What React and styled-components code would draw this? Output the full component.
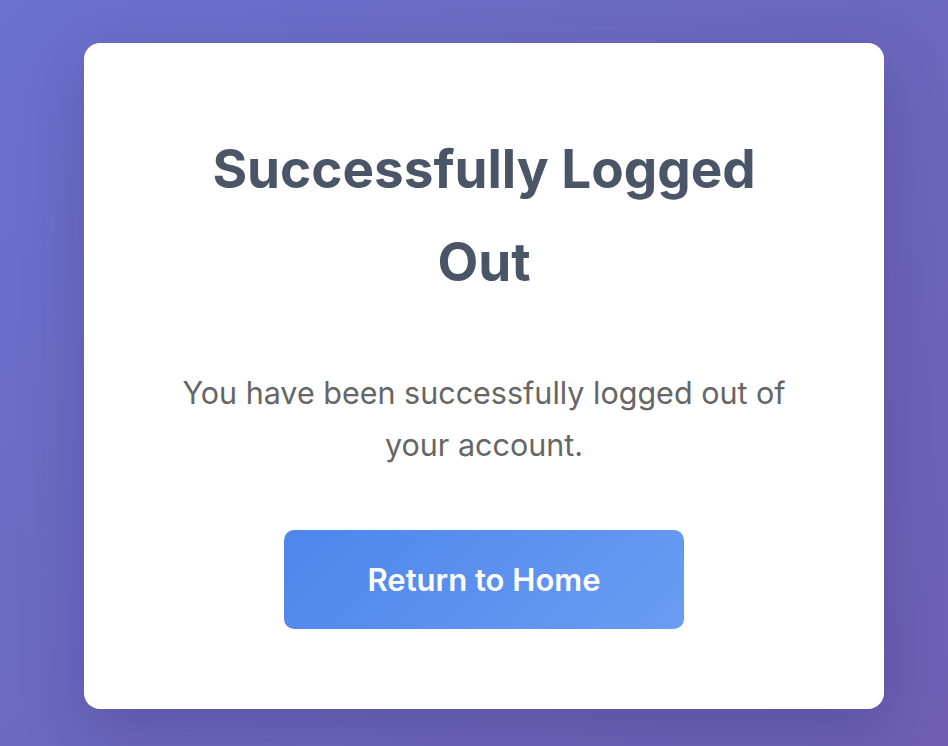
import styled, { createGlobalStyle } from 'styled-components'

const GlobalStyle = createGlobalStyle`
  html, body {
    margin: 0;
    padding: 0;
  }
  body {
    font-family: Inter, "Noto Sans", "Liberation Sans", sans-serif;
    background: linear-gradient(135deg, #6a72cd 0%, #6c68c0 50%, #6e5fb4 100%);
    min-height: 100vh;
  }
`

const Page = styled.div`
  min-height: 746px;
  box-sizing: border-box;
  padding: 43px 64px 38px 84px;
  display: flex;
  align-items: flex-start;
`

const Card = styled.div`
  width: 800px;
  box-sizing: border-box;
  padding: 80px 80px;
  background: #fff;
  border-radius: 16px;
  box-shadow: 0 20px 60px rgba(40, 30, 90, 0.25);
  display: flex;
  flex-direction: column;
  align-items: center;
  text-align: center;
`

const Title = styled.h1`
  margin: 0 0 58px;
  font-size: 53px;
  line-height: 93px;
  font-weight: 700;
  color: #4a5568;
`

const Message = styled.p`
  margin: 0 0 59px;
  font-size: 30.5px;
  line-height: 52px;
  font-weight: 400;
  color: #666;
`

const HomeButton = styled.button`
  width: 400px;
  height: 99px;
  border: none;
  border-radius: 10px;
  background: linear-gradient(135deg, #4d85ec 0%, #6a9cf2 100%);
  color: #fff;
  font-family: inherit;
  font-size: 31px;
  font-weight: 600;
  cursor: pointer;
`

const App = () => {
  return (
    <Page>
      <GlobalStyle />
      <Card>
        <Title>Successfully Logged Out</Title>
        <Message>You have been successfully logged out of your account.</Message>
        <HomeButton>Return to Home</HomeButton>
      </Card>
    </Page>
  )
}

export default App
